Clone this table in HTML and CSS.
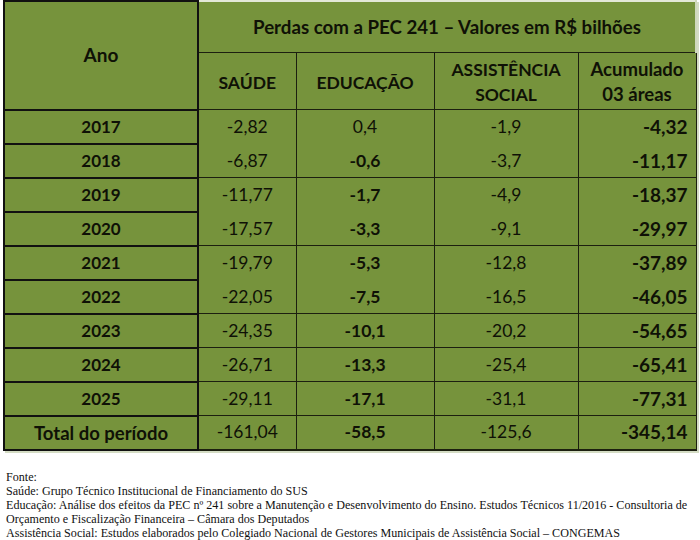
FILE: index.html
```html
<!DOCTYPE html>
<html lang="pt">
<head>
<meta charset="utf-8">
<title>Perdas com a PEC 241</title>
<link rel="stylesheet" href="styles.css">
</head>
<body>
<table class="pec">
  <colgroup>
    <col class="c-ano"><col class="c-saude"><col class="c-edu"><col class="c-assist"><col class="c-acum">
  </colgroup>
  <thead>
    <tr class="h1">
      <th class="ano-head" rowspan="2">Ano</th>
      <th class="title" colspan="4">Perdas com a PEC 241 – Valores em R$ bilhões</th>
    </tr>
    <tr class="h2">
      <th>SAÚDE</th>
      <th>EDUCAÇÃO</th>
      <th>ASSISTÊNCIA<br>SOCIAL</th>
      <th class="acum-head">Acumulado<br>03 áreas</th>
    </tr>
  </thead>
  <tbody>
    <tr class="open"><th>2017</th><td>-2,82</td><td>0,4</td><td>-1,9</td><td class="acum">-4,32</td></tr>
    <tr><th>2018</th><td>-6,87</td><td class="b">-0,6</td><td>-3,7</td><td class="acum">-11,17</td></tr>
    <tr class="open"><th>2019</th><td>-11,77</td><td class="b">-1,7</td><td>-4,9</td><td class="acum">-18,37</td></tr>
    <tr><th>2020</th><td>-17,57</td><td class="b">-3,3</td><td>-9,1</td><td class="acum">-29,97</td></tr>
    <tr class="open"><th>2021</th><td>-19,79</td><td class="b">-5,3</td><td>-12,8</td><td class="acum">-37,89</td></tr>
    <tr><th>2022</th><td>-22,05</td><td class="b">-7,5</td><td>-16,5</td><td class="acum">-46,05</td></tr>
    <tr><th>2023</th><td>-24,35</td><td class="b">-10,1</td><td>-20,2</td><td class="acum">-54,65</td></tr>
    <tr><th>2024</th><td>-26,71</td><td class="b">-13,3</td><td>-25,4</td><td class="acum">-65,41</td></tr>
    <tr><th>2025</th><td>-29,11</td><td class="b">-17,1</td><td>-31,1</td><td class="acum">-77,31</td></tr>
    <tr class="total"><th>Total do período</th><td>-161,04</td><td class="b">-58,5</td><td>-125,6</td><td class="acum">-345,14</td></tr>
  </tbody>
</table>
<div class="fonte">
  <p>Fonte:</p>
  <p>Saúde: Grupo Técnico Institucional de Financiamento do SUS</p>
  <p>Educação: Análise dos efeitos da PEC nº 241 sobre a Manutenção e Desenvolvimento do Ensino. Estudos Técnicos 11/2016 - Consultoria de<br>Orçamento e Fiscalização Financeira – Câmara dos Deputados</p>
  <p>Assistência Social: Estudos elaborados pelo Colegiado Nacional de Gestores Municipais de Assistência Social – CONGEMAS</p>
</div>
</body>
</html>
```
FILE: styles.css
```css
html, body {
  margin: 0;
  padding: 0;
  background: #ffffff;
}

.pec {
  margin: 0 0 0 3px;
  width: 692px;
  table-layout: fixed;
  border-collapse: collapse;
  background: #76933c;
  color: #0f1106;
  font-family: "Lato", "Open Sans", sans-serif;
  font-size: 17px;
  box-shadow: 2px 2px 0 #d4dcc4;
}

.c-ano { width: 194px; }
.c-saude { width: 98px; }
.c-edu { width: 138px; }
.c-assist { width: 144px; }
.c-acum { width: 118px; }

.pec th, .pec td {
  padding: 0;
  text-align: center;
  border: 1.5px solid #1c1f10;
  line-height: 24px;
}

.pec thead th {
  font-weight: 700;
  font-size: 17.5px;
}

.pec .ano-head {
  border: 2.5px solid #111;
  padding-bottom: 0;
  font-size: 19px;
}

.pec .title {
  height: 50px;
  border-top: 2px solid #e3e8d8;
  border-right: 2px solid #cfd8bc;
  font-size: 18.7px;
}

.pec .h2 th {
  height: 54px;
  line-height: 25px;
  padding-top: 2px;
}

.pec .h2 th.acum-head {
  font-size: 18.5px;
}

.pec tbody th {
  font-weight: 700;
  border-left: 2.5px solid #111;
  border-right: 2.5px solid #111;
  border-bottom: 2.5px solid #111;
  font-size: 17px;
}

.pec tbody tr.total th {
  font-size: 18.5px;
}

.pec tbody td {
  font-weight: 400;
  font-size: 17.5px;
}

.pec tbody tr {
  height: 34px;
}

.pec tbody tr.open td {
  border-bottom-color: transparent;
}

.pec tbody td.b {
  font-weight: 700;
}

.pec tbody td.acum {
  font-weight: 700;
  text-align: right;
  padding-right: 8px;
  font-size: 19px;
}

.pec tbody tr:last-child td {
  border-bottom: 2px solid #1c1f10;
}

.fonte {
  margin: 19px 0 0 6px;
  font-family: "Liberation Serif", "DejaVu Serif", serif;
  font-size: 12.1px;
  line-height: 14px;
  color: #111;
  white-space: nowrap;
}

.fonte p {
  margin: 0;
}
```
